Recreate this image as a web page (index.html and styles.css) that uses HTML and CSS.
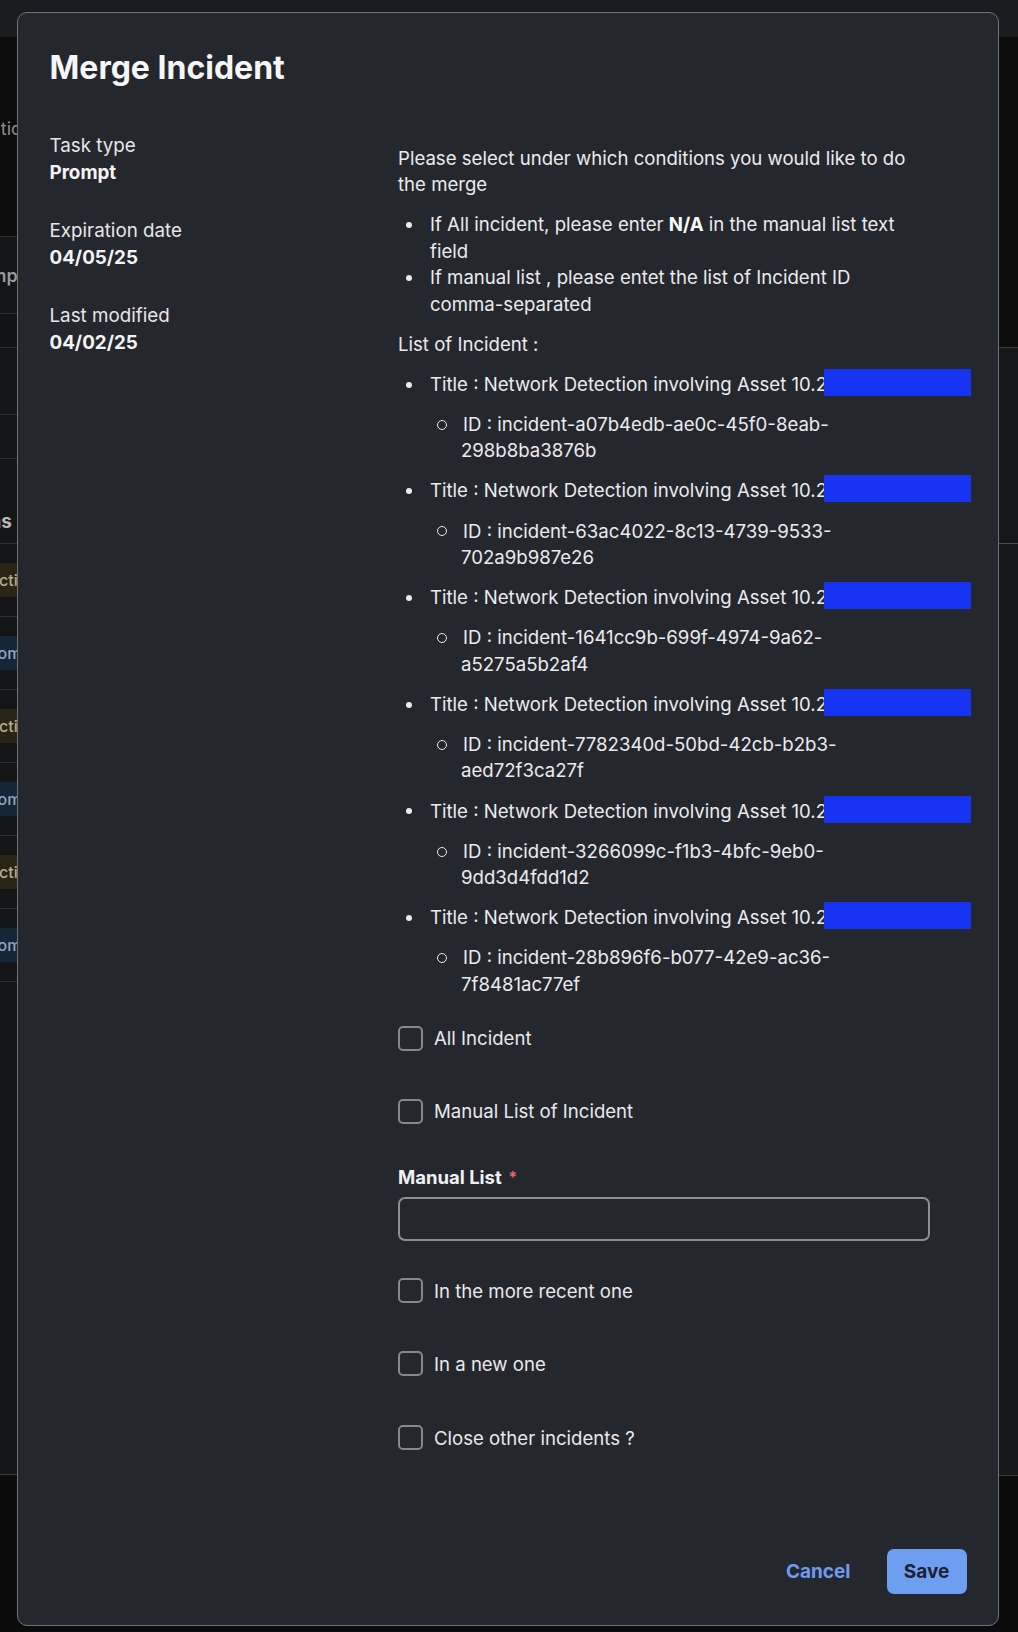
FILE: index.html
```html
<!DOCTYPE html>
<html lang="en">
<head>
<meta charset="utf-8">
<title>Merge Incident</title>
<link rel="stylesheet" href="styles.css">
</head>
<body>
<div class="page">
  <div class="topbar"></div>
  <div class="content">
    <div class="left-panel">
      <div class="lp-top"><div class="lp-cell w51"><span class="frag">Actions</span></div></div>
      <div class="lp-row r1"><div class="lp-cell w32"><span class="frag strong">Example</span></div></div>
      <div class="lp-row r2"></div>
      <div class="lp-row r3"></div>
      <div class="lp-row r4"></div>
      <div class="lp-row r5"><div class="lp-cell w12"><span class="frag head">Actions</span></div></div>
      <div class="lp-row r6"><div class="lp-cell"><span class="chip amber">Action</span></div></div>
      <div class="lp-row r6"><div class="lp-cell"><span class="chip blue">Customer</span></div></div>
      <div class="lp-row r6"><div class="lp-cell"><span class="chip amber">Action</span></div></div>
      <div class="lp-row r6"><div class="lp-cell"><span class="chip blue">Customer</span></div></div>
      <div class="lp-row r6"><div class="lp-cell"><span class="chip amber">Action</span></div></div>
      <div class="lp-row r6"><div class="lp-cell"><span class="chip blue">Customer</span></div></div>
      <div class="lp-fill"></div>
    </div>
    <div class="right-panel">
      <div class="rp-top"></div>
      <div class="rp-row"></div>
      <div class="rp-fill"></div>
    </div>
  </div>
</div>

<div class="modal" role="dialog" aria-labelledby="modal-title">
  <h1 class="modal-title" id="modal-title">Merge Incident</h1>
  <div class="modal-body">
    <aside class="meta">
      <div class="meta-item">
        <div class="meta-label">Task type</div>
        <div class="meta-value">Prompt</div>
      </div>
      <div class="meta-item">
        <div class="meta-label">Expiration date</div>
        <div class="meta-value">04/05/25</div>
      </div>
      <div class="meta-item">
        <div class="meta-label">Last modified</div>
        <div class="meta-value">04/02/25</div>
      </div>
    </aside>
    <section class="main">
      <div class="md">
        <p>Please select under which conditions you would like to do the merge</p>
        <ul class="tight">
          <li>If All incident, please enter <strong>N/A</strong> in the manual list text field</li>
          <li>If manual list , please entet the list of Incident ID comma-separated</li>
        </ul>
        <p>List of Incident :</p>
        <ul class="incidents">
          <li>Title : Network Detection involving Asset <span class="redact-anchor">10.2<span class="redact"></span></span>
            <ul><li>ID : incident-a07b4edb-ae0c-45f0-8eab-298b8ba3876b</li></ul>
          </li>
          <li>Title : Network Detection involving Asset <span class="redact-anchor">10.2<span class="redact"></span></span>
            <ul><li>ID : incident-63ac4022-8c13-4739-9533-702a9b987e26</li></ul>
          </li>
          <li>Title : Network Detection involving Asset <span class="redact-anchor">10.2<span class="redact"></span></span>
            <ul><li>ID : incident-1641cc9b-699f-4974-9a62-a5275a5b2af4</li></ul>
          </li>
          <li>Title : Network Detection involving Asset <span class="redact-anchor">10.2<span class="redact"></span></span>
            <ul><li>ID : incident-7782340d-50bd-42cb-b2b3-aed72f3ca27f</li></ul>
          </li>
          <li>Title : Network Detection involving Asset <span class="redact-anchor">10.2<span class="redact"></span></span>
            <ul><li>ID : incident-3266099c-f1b3-4bfc-9eb0-9dd3d4fdd1d2</li></ul>
          </li>
          <li>Title : Network Detection involving Asset <span class="redact-anchor">10.2<span class="redact"></span></span>
            <ul><li>ID : incident-28b896f6-b077-42e9-ac36-7f8481ac77ef</li></ul>
          </li>
        </ul>
      </div>

      <div class="fields">
        <label class="check first"><span class="box"></span><span>All Incident</span></label>
        <label class="check"><span class="box"></span><span>Manual List of Incident</span></label>
        <div class="text-field">
          <div class="field-label">Manual List <span class="req">*</span></div>
          <div class="input"></div>
        </div>
        <label class="check after-input"><span class="box"></span><span>In the more recent one</span></label>
        <label class="check"><span class="box"></span><span>In a new one</span></label>
        <label class="check"><span class="box"></span><span>Close other incidents ?</span></label>
      </div>
    </section>
  </div>
  <footer class="modal-footer">
    <button class="btn btn-text">Cancel</button>
    <button class="btn btn-primary">Save</button>
  </footer>
</div>
</body>
</html>
```

FILE: styles.css
```css
* { box-sizing: border-box; }

html, body {
  margin: 0;
  padding: 0;
}

body {
  width: 1018px;
  height: 1632px;
  overflow: hidden;
  background: #0b0b0c;
  font-family: Inter, "Noto Sans", "Liberation Sans", sans-serif;
  color: #ececee;
  position: relative;
}

/* ---------- background page ---------- */
.page {
  height: 1632px;
  display: flex;
  flex-direction: column;
}

.topbar {
  height: 37px;
  background: #1b1c1f;
  flex: none;
}

.content {
  flex: 1;
  display: flex;
}

.left-panel {
  width: 500px;
  display: flex;
  flex-direction: column;
}

.lp-top {
  height: 199px;
  background: #0c0c0d;
  display: flex;
  padding-top: 81px;
  align-items: flex-start;
}

.lp-row {
  background: #141516;
  border-top: 1px solid #2e2f32;
  display: flex;
  align-items: center;
}
.lp-row.r1 { height: 77px; }
.lp-row.r2 { height: 34px; background: #121314; }
.lp-row.r3 { height: 67px; }
.lp-row.r4 { height: 44px; }
.lp-row.r5 { height: 85px; align-items: flex-end; padding-bottom: 10px; }
.lp-row.r6 { height: 73px; }

.lp-fill {
  height: 494px;
  background: #141516;
  border-top: 1px solid #2e2f32;
  border-bottom: 1px solid #3a3b3e;
}

.lp-cell {
  width: 47px;
  overflow: hidden;
  display: flex;
  justify-content: flex-end;
  white-space: nowrap;
}
.lp-cell.w51 { width: 42px; }
.lp-cell.w32 { width: 33px; }
.lp-cell.w12 { width: 12px; }

.frag {
  font-size: 18px;
  color: #8d8e92;
}
.frag.strong { font-weight: 600; color: #9a9ba0; }
.frag.head { font-weight: 700; color: #b6b7bb; font-size: 19px; }

.chip {
  font-size: 16px;
  font-weight: 500;
  padding: 7px 10px;
  border-radius: 4px;
}
.chip.amber { background: #2a2415; color: #b7ab8c; }
.chip.blue { background: #152637; color: #8ea7c0; }

.right-panel {
  flex: 1;
  display: flex;
  flex-direction: column;
}
.rp-top { height: 310px; background: #0c0c0d; }
.rp-row {
  height: 196px;
  background: #161718;
  border-top: 1px solid #3a3b3e;
}
.rp-fill {
  height: 933px;
  background: #161718;
  border-top: 1px solid #4a4b4e;
  border-bottom: 1px solid #3a3b3e;
}

/* ---------- modal ---------- */
.modal {
  position: absolute;
  left: 17px;
  top: 12px;
  width: 982px;
  height: 1614px;
  background: #25272e;
  border: 1.5px solid #6f7278;
  border-radius: 10px;
  padding: 35px 31.5px 31.5px 31.5px;
  display: flex;
  flex-direction: column;
}

.modal-title {
  margin: 0;
  font-size: 32px;
  line-height: 40px;
  font-weight: 700;
  color: #f6f6f7;
}

.modal-body {
  display: flex;
  margin-top: 43px;
}

.meta {
  width: 348.5px;
  flex: none;
  display: flex;
  flex-direction: column;
  gap: 32px;
  padding-top: 2px;
}

.meta-item {
  font-size: 18.8px;
  line-height: 26.5px;
}
.meta-label { color: #e6e6e8; }
.meta-value { font-weight: 700; color: #f4f4f5; }

.main {
  width: 532px;
  padding-top: 13.5px;
}

.md {
  width: 520px;
  font-size: 18.6px;
  line-height: 26.5px;
  color: #ebebed;
}

.md p { margin: 0; }
.md p + ul, .md ul + p { margin-top: 13.6px; }

.md ul {
  list-style: none;
  margin: 0;
  padding: 0 0 0 32px;
}

.md ul li::before {
  content: "";
  display: inline-block;
  width: 6px;
  height: 6px;
  border-radius: 50%;
  background: #ebebed;
  margin-left: -24px;
  margin-right: 18px;
  vertical-align: middle;
  position: relative;
  top: -1px;
}

.md ul ul {
  margin-top: 13.6px;
  padding-left: 31px;
}

.md ul ul li::before {
  width: 8px;
  height: 8px;
  background: transparent;
  border: 1.5px solid #ebebed;
  margin-left: -24px;
  margin-right: 16px;
}

.md ul.incidents > li + li { margin-top: 13.6px; }

.md strong { font-weight: 700; color: #fff; }

.md li { overflow-wrap: break-word; }

.redact-anchor {
  position: relative;
  white-space: nowrap;
}

.redact {
  position: absolute;
  left: calc(100% - 3px);
  top: -4px;
  width: 147px;
  height: 27px;
  background: #1634f2;
}

/* ---------- fields ---------- */
.fields {
  display: flex;
  flex-direction: column;
  margin-top: 27.5px;
}

.check {
  display: flex;
  align-items: center;
  gap: 11px;
  height: 26.5px;
  font-size: 18.6px;
  color: #e9e9eb;
  margin-top: 46.5px;
}
.check.first { margin-top: 0; }
.check.after-input { margin-top: 36px; }
.check:last-child { margin-top: 47.5px; }

.box {
  width: 25px;
  height: 25px;
  flex: none;
  border: 2px solid #85888e;
  border-radius: 5px;
}

.text-field {
  margin-top: 39.5px;
}

.field-label {
  font-size: 18.5px;
  line-height: 26.5px;
  font-weight: 700;
  color: #f0f0f2;
}

.req {
  color: #e06a6a;
  font-weight: 700;
  font-size: 16px;
  vertical-align: top;
  margin-left: 2px;
}

.input {
  margin-top: 6.5px;
  width: 532px;
  height: 44.5px;
  border: 2px solid #8b8e94;
  border-radius: 7px;
}

/* ---------- footer ---------- */
.modal-footer {
  margin-top: auto;
  display: flex;
  justify-content: flex-end;
  gap: 18px;
}

.btn {
  font-family: Inter, "Noto Sans", "Liberation Sans", sans-serif;
  font-size: 19px;
  font-weight: 700;
  height: 45px;
  padding: 0 18px;
  border: none;
  border-radius: 7px;
  cursor: pointer;
}

.btn-text {
  background: transparent;
  color: #6e9cf0;
}

.btn-primary {
  width: 80px;
  padding: 0;
  background: #6e9ef2;
  color: #1c2130;
}
```
